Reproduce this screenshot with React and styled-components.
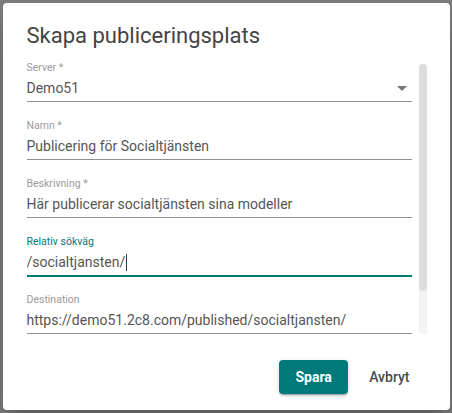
import styled, { createGlobalStyle } from 'styled-components';

const GlobalStyle = createGlobalStyle`
  html, body {
    margin: 0;
    padding: 0;
    height: 100%;
  }

  body {
    font-family: Roboto, "Liberation Sans", Arial, sans-serif;
    background: #7c7c7c;
  }
`;

const fields = [
  { id: 'server', label: 'Server *', value: 'Demo51', select: true },
  { id: 'name', label: 'Namn *', value: 'Publicering för Socialtjänsten' },
  { id: 'desc', label: 'Beskrivning *', value: 'Här publicerar socialtjänsten sina modeller' },
  { id: 'path', label: 'Relativ sökväg', value: '/socialtjansten/', focused: true },
  { id: 'dest', label: 'Destination', value: 'https://demo51.2c8.com/published/socialtjansten/' },
];

function App() {
  return (
    <>
      <GlobalStyle />
      <Backdrop>
        <Dialog role="dialog" aria-labelledby="dialog-title">
          <Title id="dialog-title">Skapa publiceringsplats</Title>
          <ScrollArea>
            <Content>
              {fields.map((f) => (
                <Field key={f.id}>
                  <Label $focused={f.focused}>{f.label}</Label>
                  <Value $focused={f.focused}>
                    {f.value}
                    {f.focused && <Caret />}
                    {f.select && (
                      <DropIcon viewBox="0 0 24 24" aria-hidden="true">
                        <path d="M7 10l5 5 5-5z" />
                      </DropIcon>
                    )}
                  </Value>
                </Field>
              ))}
            </Content>
            <ScrollTrack>
              <ScrollThumb />
            </ScrollTrack>
          </ScrollArea>
          <Actions>
            <PrimaryButton type="button">Spara</PrimaryButton>
            <TextButton type="button">Avbryt</TextButton>
          </Actions>
        </Dialog>
      </Backdrop>
    </>
  );
}

export default App;

const Backdrop = styled.div`
  height: 413px;
  display: flex;
  align-items: center;
  justify-content: center;
`;

const Dialog = styled.div`
  width: 447px;
  height: 407px;
  box-sizing: border-box;
  background: #fff;
  border-radius: 4px;
  box-shadow: 0 11px 15px -7px rgba(0, 0, 0, 0.2), 0 24px 38px 3px rgba(0, 0, 0, 0.14);
  display: flex;
  flex-direction: column;
`;

const Title = styled.h2`
  margin: 0;
  padding: 17px 24px 10px;
  font-size: 22px;
  line-height: 32px;
  font-weight: 400;
  color: #444;
`;

const ScrollArea = styled.div`
  display: flex;
  gap: 7px;
  padding-left: 24px;
`;

const Content = styled.div`
  width: 385px;
  height: 272px;
  overflow: hidden;
  display: flex;
  flex-direction: column;
  gap: 18px;
`;

const ScrollTrack = styled.div`
  width: 8px;
  height: 270px;
  margin-top: 2px;
  border-radius: 4px;
  background: #f4f4f4;
  box-shadow: inset 0 0 0 1px #efefef;
`;

const ScrollThumb = styled.div`
  height: 227px;
  border-radius: 4px;
  background: #dddddd;
`;

const Field = styled.div`
  flex-shrink: 0;
  display: flex;
  flex-direction: column;
  gap: 6px;
`;

const Label = styled.label`
  font-size: 10.5px;
  line-height: 12px;
  color: ${(p) => (p.$focused ? '#00797a' : '#9b9b9b')};
`;

const Value = styled.div`
  position: relative;
  display: flex;
  align-items: center;
  font-size: 14px;
  line-height: 17px;
  min-height: 17px;
  color: #555;
  padding-bottom: 4px;
  border-bottom: ${(p) => (p.$focused ? '2px solid #00797a' : '1px solid #8f8f8f')};
  margin-bottom: ${(p) => (p.$focused ? '-1px' : '0')};
`;

const Caret = styled.span`
  display: inline-block;
  width: 1px;
  height: 17px;
  margin-left: 1px;
  background: #2b3a55;
`;

const DropIcon = styled.svg`
  position: absolute;
  right: -2px;
  top: -4px;
  width: 24px;
  height: 24px;
  fill: #757575;
`;

const Actions = styled.div`
  margin-top: auto;
  display: flex;
  justify-content: flex-end;
  align-items: center;
  gap: 13px;
  padding: 0 32px 16px 0;
`;

const PrimaryButton = styled.button`
  width: 69px;
  height: 34px;
  border: none;
  border-radius: 4px;
  background: #00797a;
  color: #fff;
  font-family: inherit;
  font-size: 14px;
  font-weight: 700;
  box-shadow: 0 3px 1px -2px rgba(0, 0, 0, 0.2), 0 2px 2px 0 rgba(0, 0, 0, 0.14), 0 1px 5px 0 rgba(0, 0, 0, 0.12);
`;

const TextButton = styled.button`
  height: 34px;
  padding: 0 8px;
  border: none;
  background: transparent;
  color: #4a4a4a;
  font-family: inherit;
  font-size: 14px;
  font-weight: 500;
`;
